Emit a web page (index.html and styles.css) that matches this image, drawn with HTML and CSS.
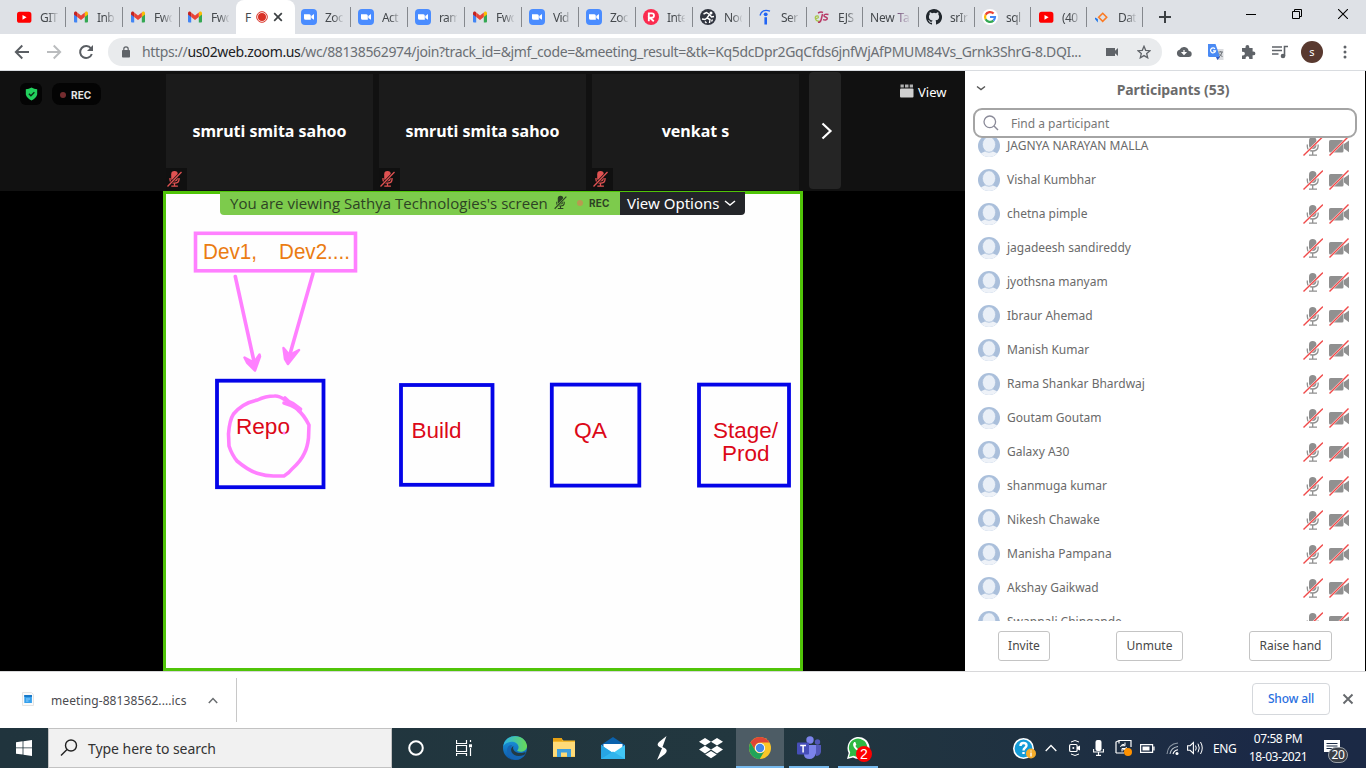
FILE: index.html
```html
<!DOCTYPE html>
<html lang="en">
<head>
<meta charset="utf-8">
<title>Zoom meeting</title>
<link rel="stylesheet" href="styles.css">
</head>
<body>
<svg class="defs" aria-hidden="true">
  <symbol id="yt" viewBox="0 0 16 16"><rect x="1" y="2.8" width="14.4" height="11" rx="2.6" fill="#f00"/><path d="M6.5 5.9v4.8L10.6 8.3z" fill="#fff"/></symbol>
  <symbol id="gmail" viewBox="0 0 16 16"><path d="M1 4.5v8a1 1 0 0 0 1 1h2.2V6z" fill="#4285f4"/><path d="M11.8 6v7.5H14a1 1 0 0 0 1-1v-8z" fill="#34a853"/><path d="M11.8 3.6V8L15 5.6V4.2c0-1.5-1.700-2.200-2.700-1.300z" fill="#fbbc04"/><path d="M1 4.200v1.400L4.200 8V3.600L3.700 2.900C2.700 2 1 2.700 1 4.200z" fill="#c5221f"/><path d="M4.200 8V3.600L8 6.500l3.800-2.900V8L8 10.900z" fill="#ea4335"/></symbol>
  <symbol id="zoom" viewBox="0 0 16 16"><rect width="16" height="16" rx="4" fill="#4a8cff"/><path d="M3 5.200h5.300q1.500 0 1.500 1.500v4H4.600Q3 10.700 3 9.200zM10.300 7l2.700-1.900v5.700L10.300 9z" fill="#fff"/></symbol>
  <symbol id="mic" viewBox="0 0 20 20"><rect x="6" y="1" width="7.400" height="12" rx="3.700" fill="#8f8f8f"/><path d="M4.300 8.500v2c0 6 10.800 6 10.800 0v-2M9.700 15v3.700M6 19.200h8" fill="none" stroke="#8f8f8f" stroke-width="1.300"/><path d="M.5 19.500L20 .5" stroke="#fff" stroke-width="2.200"/><path d="M.5 19.500L20 .5" stroke="#f04a4a" stroke-width="1.400"/></symbol>
  <symbol id="cam" viewBox="0 0 22 20"><rect x="1" y="4" width="14.500" height="12.500" rx="1.600" fill="#909090"/><path d="M16 8l5-3.500v11.800L16 12.500z" fill="#909090"/><path d="M1.500 19.500L20.500 .5" stroke="#fff" stroke-width="2.200"/><path d="M1.500 19.500L20.500 .5" stroke="#f04a4a" stroke-width="1.400"/></symbol>
  <symbol id="avatar" viewBox="0 0 22 22"><clipPath id="disc"><circle cx="11" cy="11" r="11"/></clipPath><g clip-path="url(#disc)"><rect width="22" height="22" fill="#aabfdb"/><ellipse cx="11" cy="23" rx="10.500" ry="7" fill="#eef2f8"/><ellipse cx="11" cy="9.500" rx="6.600" ry="7.800" fill="#e9eff7" stroke="#aabfdb" stroke-width=".8"/></g></symbol>
  <symbol id="muted" viewBox="0 0 16 18"><rect x="4.700" y="1" width="6.600" height="10.500" rx="3.300"/><path d="M3.500 8v1.500c0 4.800 9 4.800 9 0V8M8 13v2.800M4.800 16.200h6.600" fill="none" stroke="currentColor" stroke-width="1.300"/><path d="M1 16.500L15 2" stroke="var(--gap)" stroke-width="2.600"/><path d="M1 16.500L15 2" stroke="currentColor" stroke-width="1.300"/></symbol>
</svg>

<div class="tabs">
  <div class="tab"><svg><use href="#yt"/></svg><span>GIT</span></div>
  <div class="tab"><svg><use href="#gmail"/></svg><span>Inb</span></div>
  <div class="tab"><svg><use href="#gmail"/></svg><span>Fwd</span></div>
  <div class="tab last"><svg><use href="#gmail"/></svg><span>Fwd</span></div>
  <div class="tab active"><b>F</b><svg class="rec-ico" viewBox="0 0 12 12"><circle cx="6" cy="6" r="5.300" fill="none" stroke="#d93025" stroke-width="1"/><circle cx="6" cy="6" r="4" fill="#d93025"/></svg><svg class="x-ico" viewBox="0 0 10 10"><path d="M1.200 1.200l7.600 7.600M8.800 1.200L1.200 8.800" stroke="#3c4043" stroke-width="1.700"/></svg></div>
  <div class="tab"><svg><use href="#zoom"/></svg><span>Zoo</span></div>
  <div class="tab"><svg><use href="#zoom"/></svg><span>Act</span></div>
  <div class="tab"><svg><use href="#zoom"/></svg><span>ram</span></div>
  <div class="tab"><svg><use href="#gmail"/></svg><span>Fwd</span></div>
  <div class="tab"><svg><use href="#zoom"/></svg><span>Vid</span></div>
  <div class="tab"><svg><use href="#zoom"/></svg><span>Zoo</span></div>
  <div class="tab"><svg viewBox="0 0 16 16"><circle cx="8" cy="8" r="8" fill="#fb2b4f"/><path d="M5.800 12.200V4.300h3q2.200 0 2.200 2.200t-2.200 2.200h-2l4 3.500" fill="none" stroke="#fff" stroke-width="1.800"/></svg><span>Inte</span></div>
  <div class="tab"><svg viewBox="0 0 16 16"><circle cx="8" cy="8" r="8" fill="#30343f"/><circle cx="11" cy="4" r="1.500" fill="#fff"/><path d="M3.500 5l3-1.500 3 2L7 9l3 1.500-.5 3.500M7 9l-2 1.500-3-.5M9.500 5.500L11.500 8l2.500-.5M12.500 10.500l-1 2M5 12.500l1.500 1.500" fill="none" stroke="#fff" stroke-width="1.400"/></svg><span>Nod</span></div>
  <div class="tab"><svg viewBox="0 0 16 16"><path d="M3 6.500Q5-.5 13 2.200" fill="none" stroke="#2164f4" stroke-width="1.300"/><circle cx="8.700" cy="5.300" r="1.900" fill="#2164f4"/><path d="M8.700 8.200v7.300" stroke="#2164f4" stroke-width="2.600"/></svg><span>Ser</span></div>
  <div class="tab n"><svg viewBox="0 0 16 16"><path d="M1.500 9.500q4 0 2.500-2.500Q.5 6.500 1.500 10q1 3 4.500 2" fill="none" stroke="#a8c64c" stroke-width="1.300"/><path d="M8.500 5L7.200 10.500q-.8 3.300-3.200 2.800M4 4q3-1.500 5-.5M14.500 5.500q-4.500-.8-4.500 1.200c0 1.500 3.500 1.200 3.300 2.900-.2 1.700-2.800 1.500-4.300 1" fill="none" stroke="#b83a67" stroke-width="1.500"/></svg><span>EJS</span></div>
  <div class="tab n"><span class="wide">New <i>Ta</i></span></div>
  <div class="tab n"><svg viewBox="0 0 16 16"><path fill="#20262c" d="M8 0C3.580 0 0 3.580 0 8c0 3.540 2.290 6.530 5.470 7.590.4.070.55-.17.55-.38v-1.490c-2.230.49-2.690-.94-2.690-.94-.36-.93-.89-1.180-.89-1.180-.73-.49.050-.48.050-.48.81.060 1.230.83 1.230.83.720 1.230 1.870.87 2.330.66.070-.52.280-.87.510-1.070-1.780-.2-3.640-.89-3.640-3.950 0-.87.310-1.590.82-2.150-.08-.2-.36-1.020.08-2.120 0 0 .67-.21 2.200.82a7.600 7.600 0 0 1 4 0c1.530-1.040 2.200-.82 2.200-.82.440 1.100.160 1.920.080 2.120.51.560.82 1.270.82 2.150 0 3.070-1.870 3.750-3.650 3.950.29.250.54.730.54 1.480v2.200c0 .21.150.46.550.38A8 8 0 0 0 8 0z"/></svg><span>srIr</span></div>
  <div class="tab n"><svg viewBox="0 0 16 16"><circle cx="8" cy="8" r="8" fill="#fff"/><g fill="none" stroke-width="2.200"><path d="M11.600 4.600A5 5 0 0 0 3.600 5.800" stroke="#ea4335"/><path d="M3.600 5.800a5 5 0 0 0 0 4.400" stroke="#fbbc05"/><path d="M3.600 10.200a5 5 0 0 0 7.800 1.400" stroke="#34a853"/><path d="M11.400 11.600Q13 10 13 8H8" stroke="#4285f4"/></g></svg><span>sql</span></div>
  <div class="tab n"><svg><use href="#yt"/></svg><span>(40</span></div>
  <div class="tab n"><svg viewBox="0 0 16 16"><path d="M8.700 4.300l4 4-4 4-4-4z" fill="none" stroke="#fb7a24" stroke-width="1.600"/><path d="M1 10l2.800 3.500V10L1 8.500z" fill="#1a73e8"/></svg><span>Dat</span></div>
  <svg class="plus" viewBox="0 0 12 12"><path d="M6 0v12M0 6h12" stroke="#3c4043" stroke-width="2"/></svg>
  <div class="win">
    <svg viewBox="0 0 10 10"><path d="M0 5.500h10" stroke="#000"/></svg>
    <svg viewBox="0 0 10 10"><path d="M.5 2.500h7v7h-7zM2.500 2.500v-2h7v7h-2" fill="none" stroke="#000"/></svg>
    <svg viewBox="0 0 10 10"><path d="M0 0l10 10M10 0L0 10" stroke="#000" stroke-width="1.100"/></svg>
  </div>
</div>

<div class="toolbar">
  <svg class="t-back" viewBox="0 0 16 16"><path d="M15 8H2M8.300 1.500L1.800 8l6.500 6.500" fill="none" stroke="#5a5e63" stroke-width="1.900"/></svg>
  <svg class="t-fwd" viewBox="0 0 16 16"><path d="M1 8h13M7.700 1.500L14.200 8l-6.500 6.500" fill="none" stroke="#babcbe" stroke-width="1.900"/></svg>
  <svg class="t-reload" viewBox="0 0 16 16"><path d="M13 4.500A6 6 0 1 0 13.800 10" fill="none" stroke="#5a5e63" stroke-width="2"/><path d="M15 1v6H9z" fill="#5a5e63"/></svg>
  <div class="omni">
    <svg class="lock" viewBox="0 0 8 12"><rect y="4" width="8" height="7.500" rx=".8" fill="#5f6368"/><path d="M1.800 4.500V3a2.200 2.200 0 0 1 4.400 0v1.500" fill="none" stroke="#5f6368" stroke-width="1.200"/></svg>
    <div class="url">https://<em>us02web.zoom.us</em>/wc/88138562974/join?track_id=&amp;jmf_code=&amp;meeting_result=&amp;tk=Kq5dcDpr2GqCfds6jnfWjAfPMUM84Vs_Grnk3ShrG-8.DQI...</div>
    <svg class="o-cam" viewBox="0 0 12 8"><path d="M0 0h9v2.700L12 0v8L9 5.300V8H0z" fill="#5f6368"/></svg>
    <svg class="o-star" viewBox="0 0 14 14"><path d="M7 1.300l1.700 4 4.300.4-3.300 2.900 1 4.200L7 10.600l-3.700 2.200 1-4.200L1 5.700l4.300-.4z" fill="none" stroke="#5f6368" stroke-width="1.300"/></svg>
  </div>
  <div class="exts">
    <svg viewBox="0 0 16 16"><path d="M4 13a3.700 3.700 0 0 1-.4-7.200A4.800 4.800 0 0 1 12.700 7a3 3 0 0 1 0 6z" fill="#5f6368"/><path d="M8 6v3M6.300 8.700L8 10.500l1.700-1.800z" stroke="#fff" stroke-width="1.200" fill="#fff"/></svg>
    <svg viewBox="0 0 16 16"><path d="M6 5h9.500v11H9z" fill="#dadce0"/><path d="M0 0h7.500L12 13H1.500Q0 13 0 11.500z" fill="#4a8af4"/><path d="M8 13h4l-2.500 3z" fill="#2a56c6"/><path d="M7 4.800a2.500 2.500 0 1 0 .5 2H5" fill="none" stroke="#fff" stroke-width="1.200"/><path d="M10.500 8h4.500M12.700 7v1M14 8q-.5 3-3 5M11 9.500l3.500 3.500" stroke="#70757a" fill="none"/></svg>
    <svg viewBox="0 0 16 16"><path d="M5.500 4V3a1.900 1.900 0 0 1 3.800 0v1h3.300v3.500h.9a1.900 1.900 0 0 1 0 3.800h-.9V15H9.200v-1a1.800 1.800 0 0 0-3.600 0v1H2v-3.500h1a1.900 1.900 0 0 0 0-3.800H2V4z" fill="#5f6368"/></svg>
    <svg viewBox="0 0 16 16"><path d="M0 3h10M0 6.500h10M0 10h6.500M12.500 12V2.500H16" fill="none" stroke="#5f6368" stroke-width="1.600"/><circle cx="11" cy="12" r="2.300" fill="#5f6368"/></svg>
  </div>
  <div class="me">s</div>
  <svg class="dots" viewBox="0 0 4 14"><g fill="#5f6368"><circle cx="2" cy="2" r="1.500"/><circle cx="2" cy="7" r="1.500"/><circle cx="2" cy="12" r="1.500"/></g></svg>
</div>

<main class="page">
  <section class="meeting">
    <div class="gallery">
      <div class="status">
        <div class="shield"><svg viewBox="0 0 14 16"><path d="M7 .5Q10 2.500 13.500 2.500v6Q12.500 12.500 7 15.500 1.500 12.500.5 8.500v-6Q4 2.500 7 .5z" fill="#22d05d"/><path d="M4 7.800L6.300 10l4-4" fill="none" stroke="#082c14" stroke-width="1.500"/></svg></div>
        <div class="rec"><i></i>REC</div>
      </div>
      <div class="tile"><b>smruti smita sahoo</b><span class="mute"><svg><use href="#muted"/></svg></span></div>
      <div class="tile"><b>smruti smita sahoo</b><span class="mute"><svg><use href="#muted"/></svg></span></div>
      <div class="tile"><b>venkat s</b><span class="mute"><svg><use href="#muted"/></svg></span></div>
      <div class="next"><svg viewBox="0 0 12 18"><path d="M1.500 1.500L9.500 9l-8 7.500" fill="none" stroke="#fff" stroke-width="2.200"/></svg></div>
      <div class="view"><svg viewBox="0 0 14 14"><rect y="4.500" width="13.500" height="9" rx="1" fill="#d0d0d0"/><path d="M.5.500h3.300v3H.5zM5 .5h3.500v3H5zM9.700.5H13v3H9.700z" fill="#b0b0b0"/></svg>View</div>
    </div>
    <div class="stage">
      <div class="share">
        <svg class="board" viewBox="166 194 634 474">
          <g fill="none" stroke="#ff80ff" stroke-width="3.600">
            <rect x="195.500" y="233.300" width="160" height="37.500"/>
            <g stroke-linecap="round" stroke-linejoin="round"><path d="M235.300 276.500l18.500 84M313 273.500l-24 84"/><path d="M300.500 409q-7-6-16-9.500-6-4-10-3.500-9 0-17 4-15 3-24 14-4 6-5 20l.5 12q3 9 8 15 12 10 21 12.500 9 3 18 2.500h8q5-3 8-7 9-8 12.500-16 3-6 4-15l.5-13q-5-10-11-15l-13-12"/><path d="M284 403q8 2 16 7"/></g>
          </g>
          <g fill="#ff80ff" stroke="#ff80ff" stroke-width="2.500" stroke-linejoin="round"><path d="M244.500 357.500l9.500 5 5.500-8 .5 2-5 14-8-8zM283.500 348l6 7 9.500-5-11 14-3-5z"/></g>
          <g fill="none" stroke="#0404e8" stroke-width="3.800">
            <rect x="217" y="380.700" width="106.500" height="106.500"/><rect x="401" y="385" width="91.500" height="99.800"/><rect x="551.800" y="384.600" width="87.500" height="101"/><rect x="699" y="384.600" width="90" height="101"/>
          </g>
          <g class="devs"><text x="203" y="258.600" textLength="54" lengthAdjust="spacingAndGlyphs">Dev1,</text><text x="279" y="258.600" textLength="71" lengthAdjust="spacingAndGlyphs">Dev2....</text></g>
          <g class="envs"><text x="236" y="434" textLength="54" lengthAdjust="spacingAndGlyphs">Repo</text><text x="411.500" y="437.700" textLength="50" lengthAdjust="spacingAndGlyphs">Build</text><text x="574" y="437.700" textLength="33" lengthAdjust="spacingAndGlyphs">QA</text><text x="713" y="437.700" textLength="65" lengthAdjust="spacingAndGlyphs">Stage/</text><text x="722" y="460.700" textLength="47.500" lengthAdjust="spacingAndGlyphs">Prod</text></g>
          <circle cx="284" cy="433" r="1.500" fill="#ff80ff"/>
        </svg>
        <div class="banner">
          <div class="viewing"><span>You are viewing Sathya Technologies's screen</span><svg><use href="#muted"/></svg><i></i><b>REC</b></div>
          <div class="options"><span>View Options</span><svg viewBox="0 0 12 8"><path d="M1 2l5 4 5-4" fill="none" stroke="#fff" stroke-width="1.500"/></svg></div>
        </div>
      </div>
    </div>
  </section>
  <aside class="panel">
    <header><svg viewBox="0 0 10 6"><path d="M1 1.500L5 4.500 9 1.500" fill="none" stroke="#555" stroke-width="1.400"/></svg><h1>Participants (53)</h1></header>
    <div class="find"><svg viewBox="0 0 16 16"><circle cx="6.800" cy="6.800" r="5.800" fill="none" stroke="#8a8a98" stroke-width="1.300"/><path d="M11 11l4 4" stroke="#8a8a98" stroke-width="1.500"/></svg><span>Find a participant</span></div>
    <div class="list"><ul>
      <li><svg class="av"><use href="#avatar"/></svg><span>JAGNYA NARAYAN MALLA</span><svg class="mi"><use href="#mic"/></svg><svg class="ca"><use href="#cam"/></svg></li>
      <li><svg class="av"><use href="#avatar"/></svg><span>Vishal Kumbhar</span><svg class="mi"><use href="#mic"/></svg><svg class="ca"><use href="#cam"/></svg></li>
      <li><svg class="av"><use href="#avatar"/></svg><span>chetna pimple</span><svg class="mi"><use href="#mic"/></svg><svg class="ca"><use href="#cam"/></svg></li>
      <li><svg class="av"><use href="#avatar"/></svg><span>jagadeesh sandireddy</span><svg class="mi"><use href="#mic"/></svg><svg class="ca"><use href="#cam"/></svg></li>
      <li><svg class="av"><use href="#avatar"/></svg><span>jyothsna manyam</span><svg class="mi"><use href="#mic"/></svg><svg class="ca"><use href="#cam"/></svg></li>
      <li><svg class="av"><use href="#avatar"/></svg><span>Ibraur Ahemad</span><svg class="mi"><use href="#mic"/></svg><svg class="ca"><use href="#cam"/></svg></li>
      <li><svg class="av"><use href="#avatar"/></svg><span>Manish Kumar</span><svg class="mi"><use href="#mic"/></svg><svg class="ca"><use href="#cam"/></svg></li>
      <li><svg class="av"><use href="#avatar"/></svg><span>Rama Shankar Bhardwaj</span><svg class="mi"><use href="#mic"/></svg><svg class="ca"><use href="#cam"/></svg></li>
      <li><svg class="av"><use href="#avatar"/></svg><span>Goutam Goutam</span><svg class="mi"><use href="#mic"/></svg><svg class="ca"><use href="#cam"/></svg></li>
      <li><svg class="av"><use href="#avatar"/></svg><span>Galaxy A30</span><svg class="mi"><use href="#mic"/></svg><svg class="ca"><use href="#cam"/></svg></li>
      <li><svg class="av"><use href="#avatar"/></svg><span>shanmuga kumar</span><svg class="mi"><use href="#mic"/></svg><svg class="ca"><use href="#cam"/></svg></li>
      <li><svg class="av"><use href="#avatar"/></svg><span>Nikesh Chawake</span><svg class="mi"><use href="#mic"/></svg><svg class="ca"><use href="#cam"/></svg></li>
      <li><svg class="av"><use href="#avatar"/></svg><span>Manisha Pampana</span><svg class="mi"><use href="#mic"/></svg><svg class="ca"><use href="#cam"/></svg></li>
      <li><svg class="av"><use href="#avatar"/></svg><span>Akshay Gaikwad</span><svg class="mi"><use href="#mic"/></svg><svg class="ca"><use href="#cam"/></svg></li>
      <li><svg class="av"><use href="#avatar"/></svg><span>Swapnali Chingande</span><svg class="mi"><use href="#mic"/></svg><svg class="ca"><use href="#cam"/></svg></li>
    </ul></div>
    <footer><button class="b1">Invite</button><button class="b2">Unmute</button><button class="b3">Raise hand</button></footer>
  </aside>
</main>

<div class="downloads">
  <div class="file"><svg class="ics" viewBox="0 0 12 14"><path d="M.5.500h9l2 2v11H.5z" fill="#fafafa" stroke="#e4e4e4"/><rect x="2.300" y="3" width="7.600" height="8" fill="#35a0ec"/><path d="M2.300 3h7.600v2H2.300z" fill="#1878c8"/><path d="M4 7h4M4 9h2.500" stroke="#8fd0ff"/></svg><span>meeting-88138562....ics</span><svg class="up" viewBox="0 0 10 7"><path d="M.8 6L5 1.600 9.200 6" fill="none" stroke="#6a6d70" stroke-width="1.500"/></svg></div>
  <button class="showall">Show all</button>
  <svg class="close" viewBox="0 0 12 12"><path d="M1.500 1.500l9 9M10.500 1.500l-9 9" stroke="#66696d" stroke-width="1.900"/></svg>
</div>

<div class="taskbar">
  <div class="cell start"><svg viewBox="0 0 16 16"><path d="M0 2.200L6.600 1.300v6.200H0zM7.400 1.200L16 0v7.500H7.400zM0 8.300h6.600v6.300L0 13.700zM7.400 8.300H16V16l-8.600-1.200z" fill="#fff"/></svg></div>
  <div class="search"><svg viewBox="0 0 18 18"><circle cx="11" cy="6.500" r="5.500" fill="none" stroke="#222" stroke-width="1.400"/><path d="M7 10.500L1 16.500" stroke="#222" stroke-width="1.400"/></svg><span>Type here to search</span></div>
  <div class="cell"><svg class="s16" viewBox="0 0 16 16"><circle cx="8" cy="8" r="6.800" fill="none" stroke="#fff" stroke-width="2"/></svg></div>
  <div class="cell tv"><svg class="s16" viewBox="0 0 16 16"><path d="M.5 0v3.500h10V0M.5 5.500h10v6H.5zM.5 16v-2.500h10V16M14.500 0v2M14.500 8v8" fill="none" stroke="#fff" stroke-width="1.200"/><rect x="13" y="4.300" width="3" height="3" fill="#fff"/></svg></div>
  <div class="app"><svg class="s24" viewBox="0 0 24 24"><defs><linearGradient id="e1"><stop offset="0" stop-color="#2bb5e8"/><stop offset="1" stop-color="#68d955"/></linearGradient><linearGradient id="e2" x2="0" y2="1"><stop stop-color="#1b9de2"/><stop offset="1" stop-color="#0d58a9"/></linearGradient></defs><circle cx="12" cy="12" r="12" fill="url(#e2)"/><path d="M.3 10C2-3 22-3 24 9.500c.5 5-5.500 7.500-9.500 5.500-1-.7 1.500-1.800 1-4.500C14.500 4.500 4.500 4 .3 10z" fill="url(#e1)"/><path d="M9 9c-3 6 2 14 13.500 9-3.500 6.500-12 7.500-16 3S3.500 8.500 9 9z" fill="#1565b3"/><path d="M10.500 10c-2 4.500 3.500 8.500 10.500 6.500q2-.6 1.700.4-.5 1-1.700 2-9 3-12.500-3-1.500-4 2-5.900z" fill="#223a45"/></svg></div>
  <div class="app"><svg class="s22" viewBox="0 0 22 20"><path d="M0 1q0-1 1-1h7l2.500 2.500H22V19H0z" fill="#f4b92c"/><path d="M0 4h22v14.500H0z" fill="#ffdb78"/><path d="M0 0h9v3H0z" fill="#e6a114"/><path d="M4 11h14v8h-4v-4.500H8V19H4z" fill="#3f9fdd"/></svg></div>
  <div class="app"><svg class="s24" viewBox="0 0 24 24"><path d="M0 9L12 1l12 8v4H0z" fill="#0b62ad"/><path d="M2.500 8h19v9h-19z" fill="#fff"/><path d="M0 9l12 8 12-8v14H0z" fill="#42c6f5"/><path d="M0 9l12 8L0 23z" fill="#27a4e2"/><path d="M0 23l12-7.500L24 23z" fill="#31b4ed"/></svg></div>
  <div class="app"><svg class="s24" viewBox="0 0 24 24"><path d="M16.500 0L9 6q-3 3 .5 5l2.500 1.300L7 24l8-6q3.500-3.500 0-5.700L12.500 11z" fill="#fff"/></svg></div>
  <div class="app"><svg class="s24" viewBox="0 0 24 22"><path d="M6 1l6 3.800-6 3.800L0 4.800zM18 1l6 3.800-6 3.800-6-3.800zM6 8.800l6 3.800-6 3.800-6-3.800zM18 8.800l6 3.800-6 3.800-6-3.800zM12 14l5.800 3.600L12 21.200l-5.800-3.600z" fill="#fff"/></svg></div>
  <div class="app current"><svg class="s22" viewBox="0 0 22 22"><circle cx="11" cy="11" r="11" fill="#fbc628"/><path d="M1.500 5.500A11 11 0 0 1 20.500 5.500H11a5.500 5.500 0 0 0-4.800 8z" fill="#df4536"/><path d="M1.500 5.500A11 11 0 0 0 10.800 22l5-8.500a5.500 5.500 0 0 1-9.600 0z" fill="#20a35a"/><circle cx="11" cy="11" r="5.100" fill="#fff"/><circle cx="11" cy="11" r="4.200" fill="#4587e9"/></svg></div>
  <div class="app open"><svg class="s24" viewBox="0 0 24 24"><circle cx="20.500" cy="6" r="2.700" fill="#5258b8"/><path d="M17 9h7v7q-1 4-5 4z" fill="#5258b8"/><circle cx="13" cy="4" r="3.700" fill="#7b83eb"/><path d="M7 9h12v8q-1.500 6-6.500 6T7 19z" fill="#7b83eb"/><rect y="6.500" width="12" height="12" rx="1" fill="#464eb8"/><path d="M3.200 9.500h5.800M6.100 9.500v7" stroke="#fff" stroke-width="1.500"/></svg></div>
  <div class="app open wa"><svg class="s24" viewBox="0 0 24 24"><path d="M1 23l1.700-6A11 11 0 1 1 7 21.500z" fill="#fff"/><path d="M3 21l1.200-4.500A9.200 9.200 0 1 1 7.500 19.700z" fill="#2eb843"/><path d="M8.200 6q-2.700 2.500 1 7 4.500 4.500 7.500 2.200l.3-2-2.800-1.200-1.200 1.400q-2.400-1-3.600-3.400l1-1.300L9.300 6z" fill="#fff"/></svg><span class="badge">2</span></div>
  <div class="tray">
    <svg class="q" viewBox="0 0 23 21"><circle cx="10.500" cy="10.500" r="9.700" fill="#159cd8" stroke="#fff" stroke-width="1.600"/><path d="M7.500 8q0-3 3-3t3 2.500c0 2-3 2.200-3 5M10.500 14v2" fill="none" stroke="#fff" stroke-width="2.400"/><circle cx="18" cy="15.500" r="5" fill="#f5ac2a"/><path d="M18 12.500v1M18 14.500v4" stroke="#fff" stroke-width="1.300"/></svg>
    <svg class="ch" viewBox="0 0 12 8"><path d="M.7 7L6 1.500 11.300 7" fill="none" stroke="#fff" stroke-width="1.300"/></svg>
    <svg class="meet" viewBox="0 0 12 16"><path d="M2 2Q6-1 10 2M2 14q4 3 8 0" fill="none" stroke="#fff"/><rect x=".6" y="4.500" width="7.500" height="7" rx="1.300" fill="none" stroke="#fff" stroke-width="1.200"/><path d="M8 7l3-1.500v5L8 9z" fill="#fff"/><circle cx="4.300" cy="8" r="1" fill="#fff"/></svg>
    <svg class="mc" viewBox="0 0 11 16"><rect x="2.500" width="6" height="11" rx="2" fill="#fff"/><path d="M.6 9v3h9.800V9M5.500 12v3.500M3 15.400h5" fill="none" stroke="#fff" stroke-width="1.100"/></svg>
    <svg class="upd" viewBox="0 0 18 18"><path d="M1 14V3l3-1.500h12V8M1 14h8M4 1.500v3" fill="none" stroke="#fff" stroke-width="1.200"/><path d="M5.500 8q.5-3 4-2.700M10 3.500v3.200H7M11.500 8q-.5 3-4 3M7 12.500V9.500h3" fill="none" stroke="#fff"/><circle cx="13" cy="13" r="4" fill="#ff9100"/></svg>
    <svg class="bat" viewBox="0 0 15 9"><path d="M.6.600h12v7.800H.6zM14 2.500v4" fill="none" stroke="#fff" stroke-width="1.200"/><path d="M2.500 2.500h7v4h-7z" fill="#fff"/></svg>
    <svg class="wifi" viewBox="0 0 13 13"><g fill="none" stroke-width="1.100"><path d="M1 12Q2 2 12 1" stroke="#8d98a5"/><path d="M4 12q1-6.500 8-7.500" stroke="#bcc4cc"/><path d="M7 12q1-3.500 5-4.200" stroke="#fff"/></g><circle cx="11" cy="11.500" r="1.500" fill="#fff"/></svg>
    <svg class="vol" viewBox="0 0 16 14"><path d="M.6 4.700h2.500L6.400 1.500v11L3.100 9.300H.6z" fill="none" stroke="#fff" stroke-width="1.100"/><path d="M8.500 4.500q1.500 2.500 0 5M11 2.700q2.500 4.300 0 8.600M13.500 1q3.500 6 0 12" fill="none" stroke="#fff"/></svg>
    <span class="lang">ENG</span>
    <div class="clock"><span class="time">07:58 PM</span><span class="date">18-03-2021</span></div>
    <div class="notes"><svg viewBox="0 0 16 16"><path d="M0 0h16v12h-5v4l-4-4H0z" fill="#fff"/><path d="M2.500 3.500h11M2.500 6h11M2.500 8.500h6" stroke="#1b2b45"/></svg><span>20</span></div>
  </div>
</div>
</body>
</html>
```
FILE: styles.css
```css
* { box-sizing: border-box; }
body { margin: 0; width: 1366px; height: 768px; overflow: hidden; display: flex; flex-direction: column; background: #fff; font-family: "Noto Sans", "Open Sans", sans-serif; }
svg { display: block; flex: none; }
em, i { font-style: normal; }
button { font-family: inherit; background: #fff; padding: 0; }
.defs { width: 0; height: 0; position: absolute; }

.tabs { height: 34px; flex: none; background: #dee1e6; display: flex; align-items: flex-start; padding-left: 9px; }
.tab { width: 57px; flex: none; height: 34px; display: flex; align-items: center; padding: 0 0 0 7px; gap: 8px; background: linear-gradient(#85888d, #85888d) right center / 1px 20px no-repeat; }
.tab svg { width: 16px; height: 16px; }
.tab span { width: 18px; white-space: nowrap; font-size: 12px; letter-spacing: -0.6px; color: #45494d; -webkit-mask-image: linear-gradient(90deg, #000 45%, transparent 105%); mask-image: linear-gradient(90deg, #000 45%, transparent 105%); }
.tab .wide { width: 41px; letter-spacing: -0.2px; -webkit-mask-image: linear-gradient(90deg, #000 65%, transparent); mask-image: linear-gradient(90deg, #000 65%, transparent); }
.tab .wide i { color: #6b4470; }
.tab.n { width: 56px; }
.tab.last { width: 56px; background: none; }
.tab.active { width: 59px; margin-right: -1px; background: #fff; border-radius: 8px 8px 0 0; padding-left: 9px; gap: 0; }
.tab.active b { font-weight: 400; font-size: 12px; color: #45494d; width: 11px; }
.tab .rec-ico { width: 12px; height: 12px; }
.tab .x-ico { width: 10px; height: 10px; margin-left: 5px; }
.plus { width: 12px; height: 12px; margin: 11px 0 0 16px; }
.win { display: flex; gap: 36px; margin: 9px 18px 0 auto; }
.win svg { width: 10px; height: 10px; }

.toolbar { height: 37px; flex: none; display: flex; align-items: center; padding: 0 19px 1px 14px; border-bottom: 1px solid #d9dce0; }
.toolbar > svg { width: 16px; height: 16px; }
.toolbar .t-fwd { margin-left: 16px; }
.toolbar .t-reload { margin-left: 16px; }
.omni { width: 1054px; height: 28px; margin-left: 14px; border-radius: 14px; background: #e9ebed; display: flex; align-items: center; padding: 0 11px 0 14px; }
.lock { width: 8px; height: 12px; }
.url { margin-left: 12px; font-size: 14px; letter-spacing: -0.355px; color: #6b6f74; white-space: nowrap; width: 964px; }
.url em { color: #202124; }
.o-cam { width: 12px; height: 8px; }
.o-star { width: 14px; height: 14px; margin-left: auto; }
.exts { display: flex; gap: 16px; margin-left: 14px; }
.exts svg { width: 16px; height: 16px; }
.me { width: 22px; height: 22px; border-radius: 50%; background: #59392f; color: #fff; font-size: 11px; line-height: 21px; text-align: center; margin-left: 13px; }
.toolbar .dots { width: 4px; height: 14px; margin-left: auto; }

.page { height: 600px; flex: none; display: flex; background: #000; }
.meeting { width: 965px; display: flex; flex-direction: column; }
.gallery { height: 120px; background: #111; display: flex; padding-top: 3px; }
.status { width: 166px; display: flex; gap: 10px; padding: 9px 0 0 20px; }
.shield { width: 22px; height: 22px; border-radius: 6px; background: #040404; display: grid; place-items: center; }
.shield svg { width: 13px; height: 14px; }
.rec { width: 49px; height: 22px; border-radius: 8px; background: #040404; color: #e4e4e4; font: 700 10px/22px Inter, sans-serif; letter-spacing: .1px; display: flex; align-items: center; padding: 1px 0 0 8px; gap: 5px; }
.rec i { width: 6px; height: 6px; border-radius: 50%; background: #752c2f; }
.tile { width: 207px; height: 116px; margin-right: 6px; background: #1b1b1b; position: relative; display: flex; justify-content: center; align-items: center; color: #fff; font-size: 16px; padding-bottom: 2px; }
.mute { position: absolute; left: 0; bottom: 0; width: 21px; height: 22px; background: #101010; color: #e05252; fill: #e05252; --gap: #101010; }
.mute svg { width: 17px; height: 18px; margin: 2px 0 0 0; }
.next { width: 32px; height: 117px; margin: -2px 0 0 4px; border-radius: 4px; background: #252525; display: grid; place-items: center; }
.next svg { width: 12px; height: 18px; margin-left: 3px; }
.view { margin: 8px 0 0 59px; height: 20px; display: flex; align-items: center; gap: 4px; color: #fff; font-size: 13px; }
.view svg { width: 14px; height: 14px; margin-top: -2px; }
.stage { height: 480px; padding-left: 163px; }
.share { width: 640px; height: 480px; border: 3px solid #50c408; background: #fefefe; position: relative; }
.board { width: 634px; height: 474px; font-family: "Liberation Sans", Arial, sans-serif; font-size: 22.5px; }
.devs { fill: #eb7c12; }
.envs { fill: #dc0818; }
.banner { position: absolute; left: 54px; top: -2px; height: 23px; display: flex; border-radius: 0 0 4px 4px; overflow: hidden; }
.viewing { width: 400px; background: #7dcb4c; display: flex; align-items: center; padding: 0 0 2px 10px; color: #2d4324; font-size: 15px; }
.viewing span { width: 319px; white-space: nowrap; font-family: "Open Sans", sans-serif; letter-spacing: .02px; }
.viewing svg { width: 15px; height: 15px; margin-left: 4px; fill: #2d4324; --gap: #7dcb4c; }
.viewing i { width: 6px; height: 6px; border-radius: 50%; background: #b99a50; margin-left: 9px; }
.viewing b { margin-left: 6px; font: 700 10px Inter, sans-serif; letter-spacing: .2px; }
.options { width: 125px; background: #232529; color: #fff; font-size: 15px; display: flex; align-items: center; padding: 0 0 2px 7px; }
.options span { width: 94px; white-space: nowrap; }
.options svg { width: 12px; height: 8px; margin-left: 3px; }

.panel { width: 400px; background: #fff; display: flex; flex-direction: column; }
.panel header { height: 37px; display: flex; align-items: center; }
.panel header svg { width: 10px; height: 6px; margin: -3px 0 0 11px; }
.panel h1 { margin: 0 0 1px -5px; flex: 1; text-align: center; font-size: 14px; font-weight: 700; letter-spacing: -.05px; color: #6b6b6b; }
.find { width: 384px; height: 30px; margin-left: 8px; border: 2px solid #a4a4a4; border-radius: 9px; display: flex; align-items: center; padding-left: 8px; gap: 12px; color: #777; font-size: 12px; flex: none; }
.find svg { width: 16px; height: 16px; }
.list { height: 483px; overflow: hidden; }
.list ul { list-style: none; margin: -9px 0 0; padding: 0; }
.list li { height: 34px; display: flex; align-items: center; padding-left: 13px; color: #6a6a6a; font-size: 12px; }
.list .av { width: 22px; height: 22px; }
.list span { margin: 0 0 2px 7px; flex: 1; white-space: nowrap; }
.list .mi { width: 20px; height: 20px; margin-right: 5px; }
.list .ca { width: 22px; height: 20px; margin-right: 15px; }
.panel footer { height: 50px; display: flex; padding: 10px 33px 0; justify-content: space-between; }
.panel button { height: 30px; border: 1px solid #c4c4c4; border-radius: 3px; font-size: 12px; color: #484848; padding-bottom: 1px; }
.b1 { width: 52px; } .b2 { width: 67px; } .b3 { width: 83px; }

.downloads { height: 57px; flex: none; border-top: 1px solid #d8d8da; display: flex; align-items: center; padding-right: 12px; }
.file { width: 237px; height: 44px; border-right: 1px solid #c8c8c8; display: flex; align-items: center; padding-left: 22px; color: #4b4b4f; font-size: 12px; }
.ics { width: 12px; height: 14px; margin-top: -2px; }
.file span { width: 136px; margin-left: 17px; white-space: nowrap; letter-spacing: .1px; }
.up { width: 10px; height: 7px; margin-left: 21px; }
.showall { width: 78px; height: 32px; margin: -2px 12px 0 auto; border: 1px solid #d5d8dc; border-radius: 4px; color: #2a6fe0; font-size: 12px; font-weight: 500; letter-spacing: -.15px; padding-bottom: 1px; }
.close { width: 12px; height: 12px; margin-top: -2px; }

.taskbar { height: 40px; flex: none; display: flex; background: linear-gradient(90deg, #20343d 0%, #22373f 55%, #1f3141 75%, #1b2946 92%, #1b2945 100%); color: #fff; }
.cell { width: 48px; display: grid; place-items: center; }
.start svg { width: 16px; height: 16px; }
.search { width: 344px; background: #f1f1f1; border: 1px solid #c2c2c2; display: flex; align-items: center; padding-left: 11px; gap: 10px; color: #333; font-size: 14px; letter-spacing: -.05px; }
.search svg { width: 18px; height: 18px; }
.s16 { width: 16px; height: 16px; }
.s22 { width: 22px; height: 22px; }
.s24 { width: 24px; height: 24px; }
.tv { margin-right: 2px; }
.app { width: 49px; display: grid; place-items: center; position: relative; }
.current { width: 48px; margin-left: 1px; background: #4d5c65; border-bottom: 2px solid #76b9ed; padding-top: 2px; }
.open::after { content: ""; position: absolute; left: 5px; bottom: 0; width: 40px; height: 2px; background: #76b9ed; }
.badge { position: absolute; right: 10px; bottom: 6px; width: 16px; height: 16px; border-radius: 50%; background: #f00; font: 14px/16px "Liberation Sans", sans-serif; text-align: center; }
.tray { margin-left: auto; display: flex; align-items: center; width: 353px; font-size: 12px; }
.q { width: 23px; height: 21px; }
.ch { width: 12px; height: 8px; margin-left: 9px; }
.meet { width: 12px; height: 16px; margin-left: 12px; }
.mc { width: 11px; height: 16px; margin-left: 12px; }
.upd { width: 18px; height: 18px; margin-left: 11px; }
.bat { width: 15px; height: 9px; margin-left: 7px; }
.wifi { width: 13px; height: 13px; margin-left: 11px; }
.vol { width: 16px; height: 14px; margin-left: 8px; }
.lang { width: 24px; margin-left: 10px; letter-spacing: -0.4px; }
.clock { width: 58px; margin-left: 12px; display: flex; flex-direction: column; align-items: center; line-height: 18px; white-space: nowrap; letter-spacing: -0.45px; padding-bottom: 1px; }
.notes { position: relative; margin-left: 17px; }
.notes svg { width: 16px; height: 16px; }
.notes span { position: absolute; left: 4px; top: 7px; width: 20px; height: 16px; border: 1px solid #9aa0a8; border-radius: 8px; background: #3a3f47; font-size: 12px; line-height: 14px; text-align: center; letter-spacing: -.3px; }
```
